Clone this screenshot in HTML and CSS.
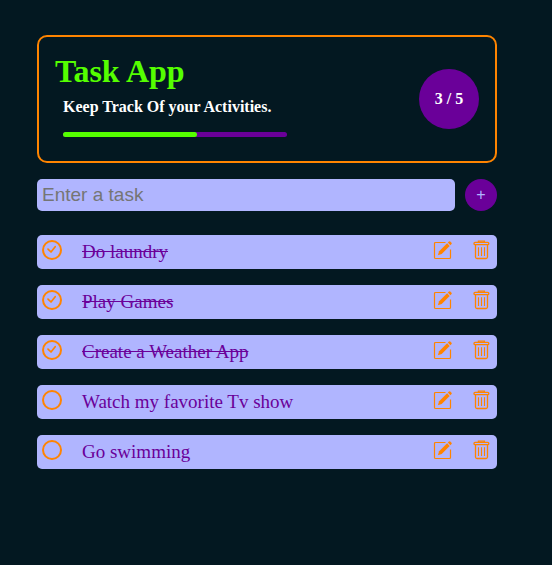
FILE: index.html
```html
<!DOCTYPE html>
<html lang="en">
<head>
  <meta charset="utf-8">
  <meta name="viewport" content="width=device-width, initial-scale=1">
  <title>Task App</title>
  <link rel="stylesheet" href="styles.css">
</head>
<body>
  <svg class="sprite" aria-hidden="true">
    <symbol id="edit" viewBox="0 0 20 20">
      <path d="M12.500 2.500H2.500Q1.500 2.500 1.500 3.500V17.500Q1.500 18.500 2.500 18.500H16.500Q17.500 18.500 17.500 17.500V9.500" fill="none" stroke="currentColor" stroke-width="1.200"/>
      <path d="M4.900 15.200L6.100 11.300L14.100 3.300L16.700 5.900L8.700 13.900Z" fill="currentColor"/>
      <path d="M14.800 2.600L15.900 1.500Q16.600 .9 17.300 1.500L18.500 2.700Q19.100 3.400 18.500 4.100L17.400 5.200Z" fill="currentColor"/>
    </symbol>
    <symbol id="trash" viewBox="0 0 20 20">
      <g fill="none" stroke="currentColor" stroke-width="1.300">
        <rect x="2" y="2.400" width="14.800" height="2.300" rx="1"/>
        <path d="M6.400 2.400V1.200H12.400V2.400M3.500 4.700V17Q3.600 18.500 5 18.500H14Q15.400 18.500 15.500 17V4.700"/>
        <path d="M6.500 7.200V16M9.500 7.200V16M12.500 7.200V16" stroke-width="1.100"/>
      </g>
    </symbol>
    <symbol id="check" viewBox="0 0 20 20">
      <path d="M6 9.200L9 12L13.200 6.700" fill="none" stroke="currentColor" stroke-width="1.700" stroke-linecap="round" stroke-linejoin="round"/>
    </symbol>
  </svg>
  <main class="app">
    <header class="summary">
      <div class="intro">
        <h1 class="title">Task App</h1>
        <div class="details">
          <p class="tagline">Keep Track Of your Activities.</p>
          <div class="progress" role="progressbar" aria-label="Tasks done" aria-valuemin="0" aria-valuemax="5" aria-valuenow="3">
            <div class="progress-fill" style="width: 60%"></div>
          </div>
        </div>
      </div>
      <p class="count">3 / 5</p>
    </header>

    <form class="entry">
      <input class="entry-field" type="text" placeholder="Enter a task" aria-label="Enter a task">
      <button class="entry-add" type="submit" aria-label="Add task">+</button>
    </form>

    <ul class="tasks">
      <li class="task">
        <span class="tick"><input id="t1" class="tick-box" type="checkbox" checked><svg class="tick-mark"><use href="#check"/></svg></span>
        <label class="name" for="t1">Do laundry</label>
        <span class="actions">
          <button class="action" type="button" aria-label="Edit"><svg class="icon"><use href="#edit"/></svg></button>
          <button class="action" type="button" aria-label="Delete"><svg class="icon"><use href="#trash"/></svg></button>
        </span>
      </li>
      <li class="task">
        <span class="tick"><input id="t2" class="tick-box" type="checkbox" checked><svg class="tick-mark"><use href="#check"/></svg></span>
        <label class="name" for="t2">Play Games</label>
        <span class="actions">
          <button class="action" type="button" aria-label="Edit"><svg class="icon"><use href="#edit"/></svg></button>
          <button class="action" type="button" aria-label="Delete"><svg class="icon"><use href="#trash"/></svg></button>
        </span>
      </li>
      <li class="task">
        <span class="tick"><input id="t3" class="tick-box" type="checkbox" checked><svg class="tick-mark"><use href="#check"/></svg></span>
        <label class="name" for="t3">Create a Weather App</label>
        <span class="actions">
          <button class="action" type="button" aria-label="Edit"><svg class="icon"><use href="#edit"/></svg></button>
          <button class="action" type="button" aria-label="Delete"><svg class="icon"><use href="#trash"/></svg></button>
        </span>
      </li>
      <li class="task">
        <span class="tick"><input id="t4" class="tick-box" type="checkbox"><svg class="tick-mark"><use href="#check"/></svg></span>
        <label class="name" for="t4">Watch my favorite Tv show</label>
        <span class="actions">
          <button class="action" type="button" aria-label="Edit"><svg class="icon"><use href="#edit"/></svg></button>
          <button class="action" type="button" aria-label="Delete"><svg class="icon"><use href="#trash"/></svg></button>
        </span>
      </li>
      <li class="task">
        <span class="tick"><input id="t5" class="tick-box" type="checkbox"><svg class="tick-mark"><use href="#check"/></svg></span>
        <label class="name" for="t5">Go swimming</label>
        <span class="actions">
          <button class="action" type="button" aria-label="Edit"><svg class="icon"><use href="#edit"/></svg></button>
          <button class="action" type="button" aria-label="Delete"><svg class="icon"><use href="#trash"/></svg></button>
        </span>
      </li>
    </ul>
  </main>
</body>
</html>
```

FILE: styles.css
```css
:root {
  --bg: #031821;
  --orange: #ff8400;
  --green: #55ff00;
  --purple: #6a0099;
  --lilac: #b0b5ff;
}

* {
  box-sizing: border-box;
  margin: 0;
  padding: 0;
}

body {
  background: var(--bg);
  color: #fff;
  font-family: "Liberation Serif", "Times New Roman", serif;
  font-size: 16px;
}

.sprite {
  display: none;
}

.app {
  padding: 35px 55px 35px 37px;
}

.summary {
  display: flex;
  align-items: center;
  justify-content: space-between;
  padding: 16px;
  border: 2px solid var(--orange);
  border-radius: 10px;
}

.title {
  color: var(--green);
  font-size: 32px;
  line-height: 36px;
}

.details {
  padding: 8px;
}

.tagline {
  font-weight: bold;
  line-height: 20px;
}

.progress {
  width: 224px;
  height: 5px;
  margin: 15px 0 0;
  border-radius: 5px;
  background: var(--purple);
}

.progress-fill {
  height: 100%;
  border-radius: 5px;
  background: var(--green);
}

.count {
  display: grid;
  place-items: center;
  width: 60px;
  height: 60px;
  border-radius: 50%;
  background: var(--purple);
  font-weight: bold;
}

.entry {
  display: flex;
  gap: 10px;
  margin-top: 16px;
}

.entry-field {
  flex: 1;
  min-width: 0;
  height: 32px;
  padding: 0 5px;
  border: 0;
  border-radius: 5px;
  background: var(--lilac);
  color: var(--purple);
  font-family: "Liberation Sans", Arial, sans-serif;
  font-size: 19px;
}

.entry-field::placeholder {
  color: #757575;
}

.entry-add {
  width: 32px;
  height: 32px;
  border: 0;
  border-radius: 50%;
  background: var(--purple);
  color: var(--lilac);
  font-family: "Liberation Sans", Arial, sans-serif;
  font-size: 16px;
}

.tasks {
  display: grid;
  gap: 16px;
  margin-top: 24px;
  list-style: none;
}

.task {
  display: flex;
  align-items: flex-start;
  padding: 5px;
  border-radius: 5px;
  background: var(--lilac);
  color: var(--purple);
  font-size: 19px;
  line-height: 24px;
}

.tick {
  display: grid;
  width: 20px;
  height: 20px;
  color: var(--orange);
}

.tick-box,
.tick-mark {
  grid-area: 1 / 1;
  width: 20px;
  height: 20px;
}

.tick-box {
  appearance: none;
  border: 2px solid var(--orange);
  border-radius: 50%;
}

.tick-mark {
  visibility: hidden;
  pointer-events: none;
}

.tick-box:checked + .tick-mark {
  visibility: visible;
}

.name {
  flex: 1;
  margin-left: 20px;
}

.task:has(:checked) .name {
  text-decoration: line-through;
}

.actions {
  display: flex;
  gap: 19px;
}

.action {
  width: 20px;
  height: 20px;
  border: 0;
  background: none;
  color: var(--orange);
}

.icon {
  display: block;
  width: 20px;
  height: 20px;
}
```
